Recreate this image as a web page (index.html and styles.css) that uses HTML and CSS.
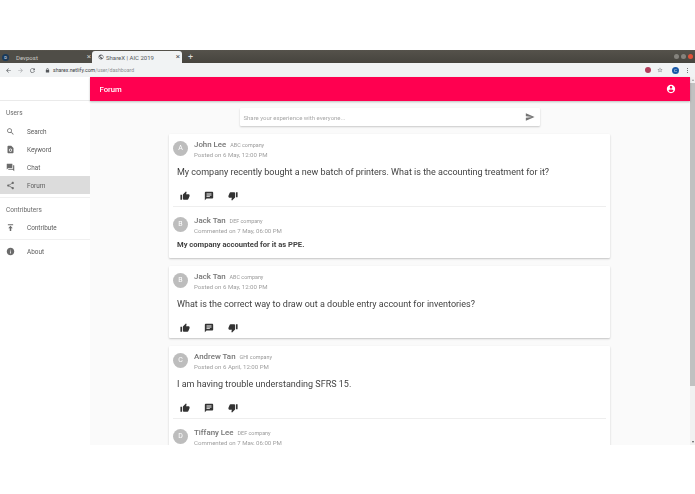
FILE: index.html
```html
<!DOCTYPE html>
<html lang="en">
<head>
    <meta charset="UTF-8">
    <meta name="viewport" content="width=device-width, initial-scale=1.0">
    <title>ShareX | AIC 2019</title>
    <link rel="stylesheet" href="styles.css">
</head>
<body>

<svg class="defs" width="0" height="0">
    <symbol id="i-up" viewBox="0 0 24 24"><path d="M1 21h4V9H1v12zm22-11c0-1.1-.9-2-2-2h-6.31l.95-4.57.03-.32c0-.41-.17-.79-.44-1.06L14.17 1 7.59 7.59C7.22 7.95 7 8.45 7 9v10c0 1.1.9 2 2 2h9c.83 0 1.54-.5 1.84-1.22l3.02-7.05c.09-.23.14-.47.14-.73v-2z"/></symbol>
    <symbol id="i-comment" viewBox="0 0 24 24"><path d="M20 2H4c-1.1 0-1.99.9-1.99 2L2 22l4-4h14c1.1 0 2-.9 2-2V4c0-1.1-.9-2-2-2zM6 9h12v2H6V9zm8 5H6v-2h8v2zm4-6H6V6h12v2z"/></symbol>
    <symbol id="i-down" viewBox="0 0 24 24"><path d="M15 3H6c-.83 0-1.54.5-1.84 1.22l-3.02 7.05c-.09.23-.14.47-.14.73v2c0 1.1.9 2 2 2h6.31l-.95 4.57-.03.32c0 .41.17.79.44 1.06L9.83 23l6.59-6.59c.36-.36.58-.86.58-1.41V5c0-1.1-.9-2-2-2zm4 0v12h4V3h-4z"/></symbol>
</svg>

<div class="browser">
    <div class="tabstrip">
        <div class="tab">
            <span class="favicon-d">D</span>
            <span class="tab-title">Devpost</span>
            <span class="tab-x">×</span>
        </div>
        <div class="tab tab-active">
            <svg class="globe" viewBox="0 0 24 24"><path d="M12 2C6.48 2 2 6.48 2 12s4.48 10 10 10 10-4.48 10-10S17.52 2 12 2zm-1 17.9C7.05 19.4 4 16.05 4 12c0-.62.08-1.21.21-1.79L9 15v1c0 1.1.9 2 2 2v1.9zm6.9-2.54c-.26-.81-1-1.36-1.9-1.36h-1v-3c0-.55-.45-1-1-1H8v-2h2c.55 0 1-.45 1-1V7h2c1.1 0 2-.9 2-2v-.41c2.93 1.19 5 4.06 5 7.41 0 2.08-.8 3.97-2.1 5.36z"/></svg>
            <span class="tab-title">ShareX | AIC 2019</span>
            <span class="tab-x">×</span>
        </div>
        <span class="new-tab">+</span>
        <div class="win-buttons">
            <span class="win-btn"></span>
            <span class="win-btn"></span>
            <span class="win-btn win-close"></span>
        </div>
    </div>

    <div class="toolbar">
        <svg class="nav-icon" viewBox="0 0 24 24"><path d="M20 11H7.83l5.59-5.59L12 4l-8 8 8 8 1.41-1.41L7.83 13H20v-2z"/></svg>
        <svg class="nav-icon nav-off" viewBox="0 0 24 24"><path d="M12 4l-1.41 1.41L16.17 11H4v2h12.17l-5.58 5.59L12 20l8-8z"/></svg>
        <svg class="nav-icon" viewBox="0 0 24 24"><path d="M17.65 6.35C16.2 4.9 14.21 4 12 4c-4.42 0-7.99 3.58-7.99 8s3.57 8 7.99 8c3.73 0 6.84-2.55 7.73-6h-2.08c-.82 2.33-3.04 4-5.65 4-3.31 0-6-2.69-6-6s2.69-6 6-6c1.66 0 3.14.69 4.22 1.78L13 11h7V4l-2.35 2.35z"/></svg>
        <svg class="lock" viewBox="0 0 24 24"><path d="M18 8h-1V6c0-2.76-2.24-5-5-5S7 3.24 7 6v2H6c-1.1 0-2 .9-2 2v10c0 1.1.9 2 2 2h12c1.1 0 2-.9 2-2V10c0-1.1-.9-2-2-2zM9 6c0-1.66 1.34-3 3-3s3 1.34 3 3v2H9V6z"/></svg>
        <span class="url">sharex.netlify.com<span class="url-path">/user/dashboard</span></span>
        <div class="tool-right">
            <span class="ext-icon"></span>
            <svg class="star" viewBox="0 0 24 24"><path d="M22 9.24l-7.19-.62L12 2 9.19 8.63 2 9.24l5.46 4.73L5.82 21 12 17.27 18.18 21l-1.63-7.03L22 9.24zM12 15.4l-3.76 2.27 1-4.28-3.32-2.88 4.38-.38L12 6.1l1.71 4.04 4.38.38-3.32 2.88 1 4.28L12 15.4z"/></svg>
            <span class="profile">C</span>
            <span class="kebab"></span>
        </div>
    </div>

    <div class="app">
        <aside class="sidebar">
            <div class="side-top"></div>
            <div class="side-label side-label-first">Users</div>
            <div class="side-item">
                <svg class="side-icon" viewBox="0 0 24 24"><path d="M15.5 14h-.79l-.28-.27C15.41 12.59 16 11.11 16 9.5 16 5.91 13.09 3 9.5 3S3 5.91 3 9.5 5.91 16 9.5 16c1.61 0 3.09-.59 4.23-1.57l.27.28v.79l5 4.99L20.49 19l-4.99-5zm-6 0C7.01 14 5 11.99 5 9.5S7.01 5 9.5 5 14 7.01 14 9.5 11.99 14 9.5 14z"/></svg>
                Search
            </div>
            <div class="side-item">
                <svg class="side-icon" viewBox="0 0 24 24"><path fill-rule="evenodd" d="M14 2H6c-1.1 0-2 .9-2 2v16c0 1.1.9 2 2 2h12c1.1 0 2-.9 2-2V8l-6-6zm-2 7a4.5 4.5 0 1 1 0 9 4.5 4.5 0 0 1 0-9zm0 2a2.500 2.500 0 1 0 0 5 2.500 2.500 0 0 0 0-5z"/></svg>
                Keyword
            </div>
            <div class="side-item">
                <svg class="side-icon" viewBox="0 0 24 24"><path d="M21 6h-2v9H6v2c0 .55.45 1 1 1h11l4 4V7c0-.55-.45-1-1-1zm-4 6V3c0-.55-.45-1-1-1H3c-.55 0-1 .45-1 1v14l4-4h10c.55 0 1-.45 1-1z"/></svg>
                Chat
            </div>
            <div class="side-item side-active">
                <svg class="side-icon" viewBox="0 0 24 24"><path d="M18 16.080c-.76 0-1.440.3-1.960.77L8.910 12.700c.05-.23.09-.46.09-.7s-.04-.47-.09-.7l7.050-4.110c.54.5 1.250.81 2.040.81 1.660 0 3-1.340 3-3s-1.340-3-3-3-3 1.340-3 3c0 .24.04.47.09.7L8.040 9.810C7.500 9.310 6.790 9 6 9c-1.660 0-3 1.340-3 3s1.340 3 3 3c.79 0 1.500-.31 2.040-.81l7.120 4.160c-.05.21-.08.43-.08.65 0 1.610 1.310 2.920 2.920 2.920 1.610 0 2.920-1.310 2.920-2.920s-1.310-2.920-2.920-2.920z"/></svg>
                Forum
            </div>
            <div class="side-divider"></div>
            <div class="side-label">Contributers</div>
            <div class="side-item side-item-gap">
                <svg class="side-icon" viewBox="0 0 24 24"><path d="M5 3v3h14V3H5zm7 4l-6 7h4v7h4v-7h4l-6-7z"/></svg>
                Contribute
            </div>
            <div class="side-divider"></div>
            <div class="side-item side-item-about">
                <svg class="side-icon" viewBox="0 0 24 24"><path d="M12 2C6.480 2 2 6.480 2 12s4.480 10 10 10 10-4.480 10-10S17.520 2 12 2zm1 15h-2v-6h2v6zm0-8h-2V7h2v2z"/></svg>
                About
            </div>
        </aside>

        <div class="main">
            <header class="appbar">
                <span class="appbar-title">Forum</span>
                <svg class="account" viewBox="0 0 24 24"><path d="M12 2C6.480 2 2 6.480 2 12s4.480 10 10 10 10-4.480 10-10S17.520 2 12 2zm0 3c1.660 0 3 1.340 3 3s-1.340 3-3 3-3-1.340-3-3 1.340-3 3-3zm0 14.200c-2.500 0-4.710-1.280-6-3.220.03-1.990 4-3.080 6-3.080 1.990 0 5.970 1.090 6 3.080-1.290 1.940-3.500 3.220-6 3.220z"/></svg>
            </header>

            <div class="content">
                <div class="share-box">
                    <span class="share-placeholder">Share your experience with everyone...</span>
                    <svg class="send" viewBox="0 0 24 24"><path d="M2.010 21L23 12 2.010 3 2 10l15 2-15 2z"/></svg>
                </div>

                <div class="card">
                    <div class="person">
                        <span class="avatar">A</span>
                        <div>
                            <div class="name-line"><span class="name">John Lee</span><span class="company">ABC company</span></div>
                            <div class="date">Posted on 6 May, 12:00 PM</div>
                        </div>
                    </div>
                    <p class="post-text">My company recently bought a new batch of printers. What is the accounting treatment for it?</p>
                    <div class="actions">
                        <svg><use href="#i-up"/></svg>
                        <svg><use href="#i-comment"/></svg>
                        <svg><use href="#i-down"/></svg>
                    </div>
                    <div class="comment">
                        <div class="person person-comment">
                            <span class="avatar">B</span>
                            <div>
                                <div class="name-line"><span class="name">Jack Tan</span><span class="company">DEF company</span></div>
                                <div class="date">Commented on 7 May, 06:00 PM</div>
                            </div>
                        </div>
                        <p class="comment-text">My company accounted for it as PPE.</p>
                    </div>
                </div>

                <div class="card">
                    <div class="person">
                        <span class="avatar">B</span>
                        <div>
                            <div class="name-line"><span class="name">Jack Tan</span><span class="company">ABC company</span></div>
                            <div class="date">Posted on 6 May, 12:00 PM</div>
                        </div>
                    </div>
                    <p class="post-text">What is the correct way to draw out a double entry account for inventories?</p>
                    <div class="actions">
                        <svg><use href="#i-up"/></svg>
                        <svg><use href="#i-comment"/></svg>
                        <svg><use href="#i-down"/></svg>
                    </div>
                </div>

                <div class="card">
                    <div class="person">
                        <span class="avatar">C</span>
                        <div>
                            <div class="name-line"><span class="name">Andrew Tan</span><span class="company">GHI company</span></div>
                            <div class="date">Posted on 6 April, 12:00 PM</div>
                        </div>
                    </div>
                    <p class="post-text">I am having trouble understanding SFRS 15.</p>
                    <div class="actions">
                        <svg><use href="#i-up"/></svg>
                        <svg><use href="#i-comment"/></svg>
                        <svg><use href="#i-down"/></svg>
                    </div>
                    <div class="comment">
                        <div class="person person-comment">
                            <span class="avatar">D</span>
                            <div>
                                <div class="name-line"><span class="name">Tiffany Lee</span><span class="company">DEF company</span></div>
                                <div class="date">Commented on 7 May, 06:00 PM</div>
                            </div>
                        </div>
                    </div>
                </div>
            </div>
        </div>

        <div class="scrollbar">
            <span class="arrow arrow-up"></span>
            <span class="thumb"></span>
            <span class="arrow arrow-down"></span>
        </div>
    </div>
</div>

</body>
</html>
```

FILE: styles.css
```css
* {
    box-sizing: border-box;
}

body {
    margin: 0;
    background: #fff;
    font-family: Roboto, "Liberation Sans", sans-serif;
    color: #424242;
}

.defs {
    display: block;
    height: 0;
}

.browser {
    margin-top: 50px;
    height: 395px;
    width: 695px;
    display: flex;
    flex-direction: column;
    overflow: hidden;
    filter: blur(0.35px);
}

/* chrome */
.tabstrip {
    height: 13px;
    background: linear-gradient(#55524b, #46443e);
    display: flex;
    align-items: flex-end;
    flex: none;
}

.tab {
    width: 93px;
    height: 12px;
    display: flex;
    align-items: center;
    padding: 0 2px 0 2px;
    font-size: 6px;
    color: #c9c8c4;
    background: #4f4d47;
}

.tab-active {
    width: 90px;
    margin-left: -1px;
    padding-left: 6px;
    background: #f1f3f4;
    color: #55585c;
    border-radius: 3px 3px 0 0;
}

.favicon-d {
    width: 7px;
    height: 7px;
    margin-right: 7px;
    border-radius: 50%;
    background: #1a3a5a;
    color: #fff;
    font-size: 4px;
    line-height: 7px;
    text-align: center;
}

.globe {
    width: 6px;
    height: 6px;
    margin-right: 2px;
    fill: #5a5d61;
}

.tab-title {
    flex: 1;
}

.tab-x {
    font-size: 8px;
    line-height: 8px;
}

.new-tab {
    margin-left: 6px;
    color: #ddd;
    font-size: 9px;
    line-height: 12px;
}

.win-buttons {
    margin-left: auto;
    margin-right: 2px;
    align-self: center;
    display: flex;
    gap: 2px;
}

.win-btn {
    width: 5px;
    height: 5px;
    border-radius: 50%;
    background: #85837d;
}

.win-close {
    background: #e0533a;
}

.toolbar {
    height: 14px;
    background: #f1f3f4;
    display: flex;
    align-items: center;
    padding-left: 5px;
    flex: none;
}

.nav-icon {
    width: 7px;
    height: 7px;
    margin-right: 5px;
    fill: #55585c;
}

.nav-off {
    fill: #a5a7aa;
}

.lock {
    width: 5px;
    height: 5px;
    margin-left: 4px;
    margin-right: 3px;
    fill: #55585c;
}

.url {
    font-size: 5.2px;
    color: #3a3c3f;
}

.url-path {
    color: #8c8f93;
}

.tool-right {
    margin-left: auto;
    display: flex;
    align-items: center;
    padding-right: 7px;
}

.ext-icon {
    width: 6px;
    height: 6px;
    border-radius: 50%;
    background: #b13d5a;
    margin-right: 6px;
}

.star {
    width: 6px;
    height: 6px;
    margin-right: 9px;
    fill: #6a6d71;
}

.profile {
    width: 7px;
    height: 7px;
    margin-right: 8px;
    border-radius: 50%;
    background: #1757a6;
    color: #fff;
    font-size: 4px;
    line-height: 7px;
    text-align: center;
}

.kebab {
    width: 1px;
    height: 5px;
    background: repeating-linear-gradient(#777 0 1px, transparent 1px 2px);
}

/* app */
.app {
    flex: 1;
    min-height: 0;
    display: flex;
}

.sidebar {
    width: 90px;
    flex: none;
    background: #fff;
    font-size: 6.4px;
    color: #5c5c5c;
    box-shadow: 1px 0 0 #eee;
}

.side-top {
    height: 24px;
    border-bottom: 1px solid #eaeaea;
}

.side-label {
    height: 22px;
    padding-left: 6px;
    line-height: 24px;
    font-size: 6.5px;
    color: #6b6b6b;
}

.side-label-first {
    height: 21px;
    line-height: 25px;
}

.side-item {
    height: 18px;
    display: flex;
    align-items: center;
    padding: 1px 0 0 6px;
}

.side-active {
    background: #dcdcdc;
}

.side-item-gap {
    margin-top: -2px;
    margin-bottom: 2px;
}

.side-item-about {
    margin-top: 2px;
}

.side-icon {
    width: 9px;
    height: 9px;
    margin-right: 12px;
    fill: #6b6b6b;
    flex: none;
}

.side-divider {
    height: 1px;
    margin-top: 3px;
    background: #f0f0f0;
}

.main {
    flex: 1;
    min-width: 0;
    display: flex;
    flex-direction: column;
    background: #fafafa;
}

.appbar {
    height: 24px;
    background: #ff0050;
    box-shadow: 0 1px 2px rgba(0, 0, 0, 0.25);
    color: #fff;
    display: flex;
    align-items: center;
    justify-content: space-between;
    padding: 0 14px 0 9.5px;
    flex: none;
    position: relative;
}

.appbar-title {
    font-size: 7.7px;
    font-weight: 500;
}

.account {
    width: 10px;
    height: 10px;
    fill: #fff;
}

.content {
    flex: 1;
    min-height: 0;
    overflow: hidden;
    display: flex;
    flex-direction: column;
    align-items: center;
    padding: 7px 1px 0 0;
}

.share-box {
    width: 300px;
    height: 18px;
    flex: none;
    background: #fff;
    box-shadow: 0 1px 2px rgba(0, 0, 0, 0.2);
    border-radius: 1px;
    display: flex;
    align-items: center;
    justify-content: space-between;
    padding: 0 5px 0 4px;
    margin-bottom: 8px;
}

.share-placeholder {
    font-size: 6px;
    color: #a8a8a8;
}

.send {
    width: 10px;
    height: 10px;
    fill: #757575;
}

.card {
    width: 441px;
    flex: none;
    background: #fff;
    box-shadow: 0 1px 2px rgba(0, 0, 0, 0.22);
    border-radius: 1px;
    margin-bottom: 8px;
    padding: 0 4px;
}

.person {
    height: 26px;
    display: flex;
    align-items: center;
    padding-top: 2px;
}

.person-comment {
    height: 31px;
    padding-top: 3px;
}

.person-comment .avatar {
    margin-top: 1px;
}

.avatar {
    width: 15px;
    height: 15px;
    margin-right: 6px;
    border-radius: 50%;
    background: #bdbdbd;
    color: #fff;
    font-size: 7px;
    line-height: 15px;
    text-align: center;
    flex: none;
}

.name-line {
    line-height: 10px;
    white-space: nowrap;
}

.name {
    font-size: 7.9px;
    font-weight: 500;
    color: #757575;
}

.company {
    margin-left: 4px;
    font-size: 5.4px;
    color: #9a9a9a;
}

.date {
    font-size: 6.1px;
    line-height: 9px;
    color: #9e9e9e;
}

.post-text {
    margin: 0;
    padding: 6px 4px 0;
    height: 26px;
    font-size: 9px;
    line-height: 12px;
    color: #424242;
}

.actions {
    height: 20px;
    padding-left: 7px;
    display: flex;
    align-items: center;
    gap: 14px;
}

.actions svg {
    width: 10px;
    height: 10px;
    fill: #333;
}

.comment {
    border-top: 1px solid #eee;
}

.comment-text {
    margin: 0;
    padding: 1px 4px 0;
    height: 20px;
    font-size: 7.6px;
    line-height: 12px;
    font-weight: 700;
    color: #424242;
}

.scrollbar {
    width: 5px;
    flex: none;
    background: #f1f1f1;
    display: flex;
    flex-direction: column;
    align-items: center;
}

.arrow {
    width: 0;
    height: 0;
    margin: 2px 0;
    border-left: 1.5px solid transparent;
    border-right: 1.5px solid transparent;
    flex: none;
}

.arrow-up {
    border-bottom: 2px solid #999;
}

.arrow-down {
    margin-top: auto;
    border-top: 2px solid #555;
}

.thumb {
    width: 5px;
    height: 303px;
    background: #c1c1c1;
    flex: none;
}
```
